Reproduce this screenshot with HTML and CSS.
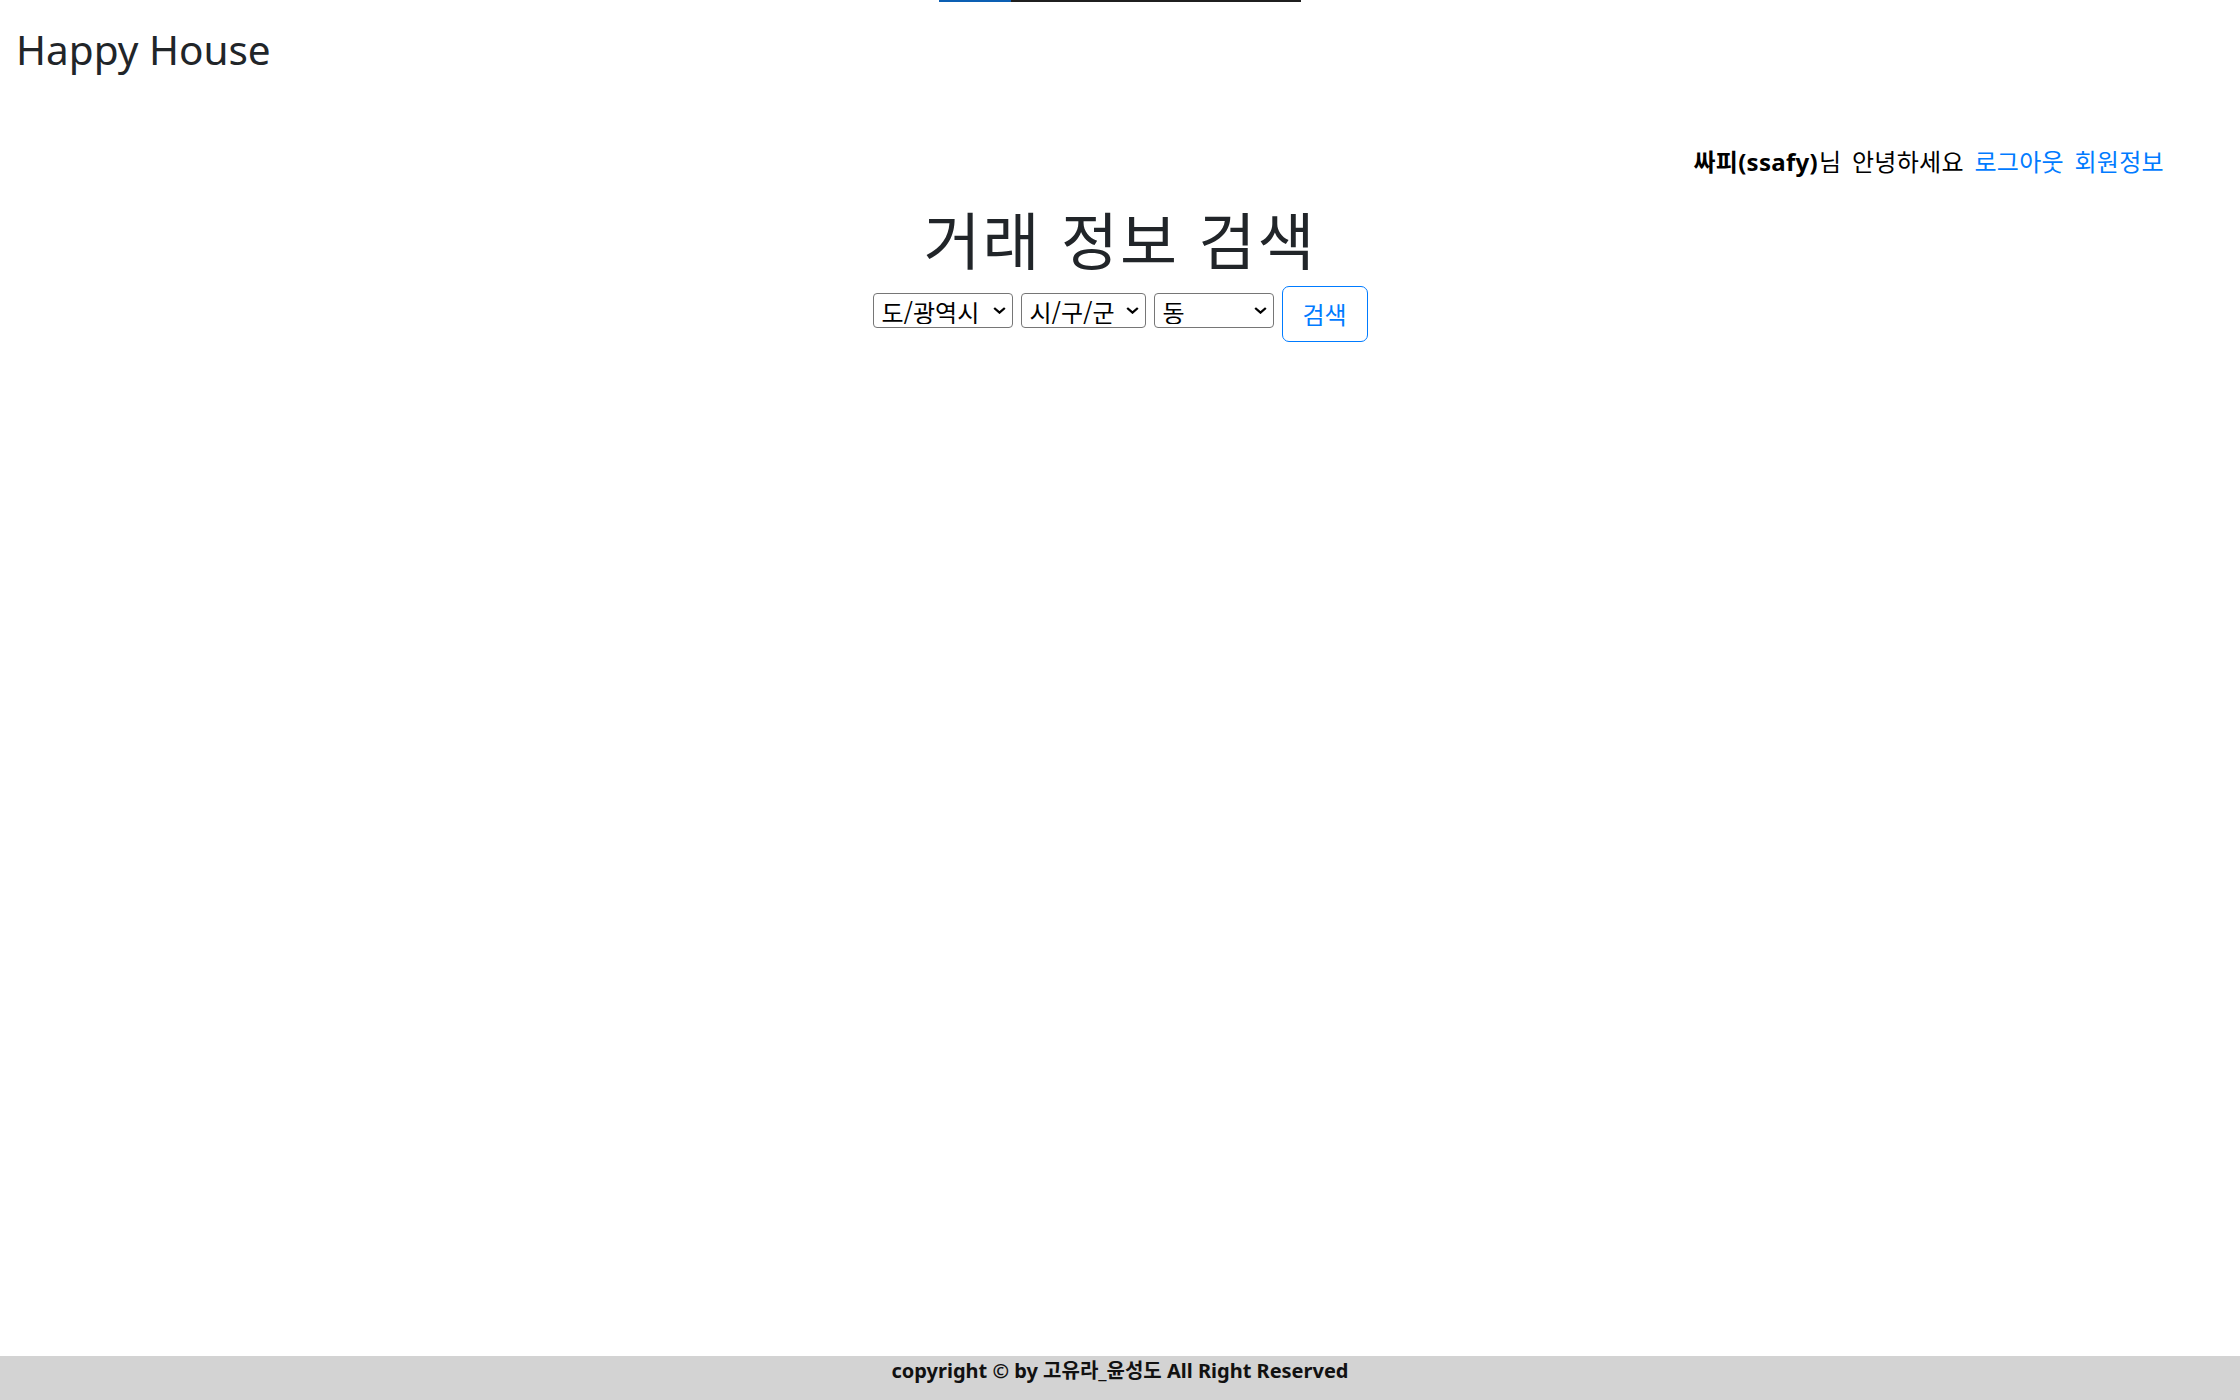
FILE: index.html
```html
<!DOCTYPE html>
<html lang="ko">
<head>
<meta charset="utf-8">
<title>Happy House</title>
<link rel="stylesheet" href="styles.css">
</head>
<body>
<div class="page">
  <div class="progress"><div class="progress-fill"></div></div>
  <header class="site-header">
    <h1 class="brand">Happy House</h1>
  </header>
  <main class="main">
    <div class="user-info"><strong class="user-name">싸피(ssafy)</strong>님 안녕하세요 <a class="user-link" href="#">로그아웃</a> <a class="user-link" href="#">회원정보</a></div>
    <h2 class="search-title">거래 정보 검색</h2>
    <form class="search-form">
      <span class="sel-wrap">
        <select class="sel sel-sido"><option>도/광역시</option></select>
        <svg class="chev" viewBox="0 0 13 7" width="13" height="7"><path d="M1.2 1 L6.5 5.6 L11.8 1" fill="none" stroke="#000" stroke-width="2.3"/></svg>
      </span>
      <span class="sel-wrap">
        <select class="sel sel-gugun"><option>시/구/군</option></select>
        <svg class="chev" viewBox="0 0 13 7" width="13" height="7"><path d="M1.2 1 L6.5 5.6 L11.8 1" fill="none" stroke="#000" stroke-width="2.3"/></svg>
      </span>
      <span class="sel-wrap">
        <select class="sel sel-dong"><option>동</option></select>
        <svg class="chev" viewBox="0 0 13 7" width="13" height="7"><path d="M1.2 1 L6.5 5.6 L11.8 1" fill="none" stroke="#000" stroke-width="2.3"/></svg>
      </span>
      <button class="btn-search" type="button">검색</button>
    </form>
  </main>
  <footer class="footer">copyright © by 고유라_윤성도 All Right Reserved</footer>
</div>
</body>
</html>
```

FILE: styles.css
```css
* { box-sizing: border-box; }
html, body { margin: 0; padding: 0; background: #fff; }
body {
  font-family: "Noto Sans", "Noto Sans CJK KR", sans-serif;
  color: #212529;
}
.page {
  min-height: 100vh;
  display: flex;
  flex-direction: column;
}
.progress {
  width: 362px;
  height: 2px;
  margin: 0 auto;
  background: #1f1f1f;
  display: flex;
}
.progress-fill {
  width: 72px;
  height: 2px;
  background: #0c5fb3;
}
.site-header {
  padding: 22px 0 0 16px;
}
.brand {
  margin: 0;
  font-size: 40.5px;
  line-height: 52px;
  font-weight: 400;
  color: #212529;
}
.main {
  flex: 1;
  display: flex;
  flex-direction: column;
}
.user-info {
  margin-top: 69px;
  padding-right: 76px;
  text-align: right;
  font-family: "Noto Sans", "Noto Sans CJK KR", sans-serif;
  font-size: 24px;
  line-height: 33px;
  word-spacing: 4px;
  letter-spacing: 0.3px;
  color: #000;
}
.user-name { font-weight: 700; margin-right: 1px; }
.user-link { color: #007bff; text-decoration: none; }
.search-title {
  margin: 25px 0 0;
  text-align: center;
  font-family: "Noto Sans CJK KR", sans-serif;
  font-size: 62px;
  line-height: 70px;
  letter-spacing: 2px;
  font-weight: 400;
  color: #212529;
}
.search-form {
  margin-top: 13px;
  display: flex;
  justify-content: center;
  align-items: flex-start;
  gap: 8px;
}
.sel-wrap {
  position: relative;
  display: block;
  margin-top: 7px;
}
.sel {
  display: block;
  appearance: none;
  -webkit-appearance: none;
  height: 35px;
  font-family: "Noto Sans CJK KR", sans-serif;
  font-size: 24px;
  color: #000;
  border: 1px solid #767676;
  border-radius: 4px;
  background: #fff;
  padding: 0 24px 3px 8px;
}
.chev {
  position: absolute;
  right: 7px;
  top: 14px;
  pointer-events: none;
}
.sel-sido { width: 140px; }
.sel-gugun { width: 125px; }
.sel-dong { width: 120px; }
.btn-search {
  width: 86px;
  height: 56px;
  border: 1px solid #007bff;
  border-radius: 7px;
  background: #fff;
  color: #007bff;
  font-family: "Noto Sans CJK KR", sans-serif;
  font-size: 24px;
  padding: 0 0 2px;
}
.footer {
  height: 44px;
  background: #d3d3d3;
  text-align: center;
  font-weight: 700;
  font-size: 20px;
  line-height: 30px;
  color: #111;
  overflow: hidden;
}
```
